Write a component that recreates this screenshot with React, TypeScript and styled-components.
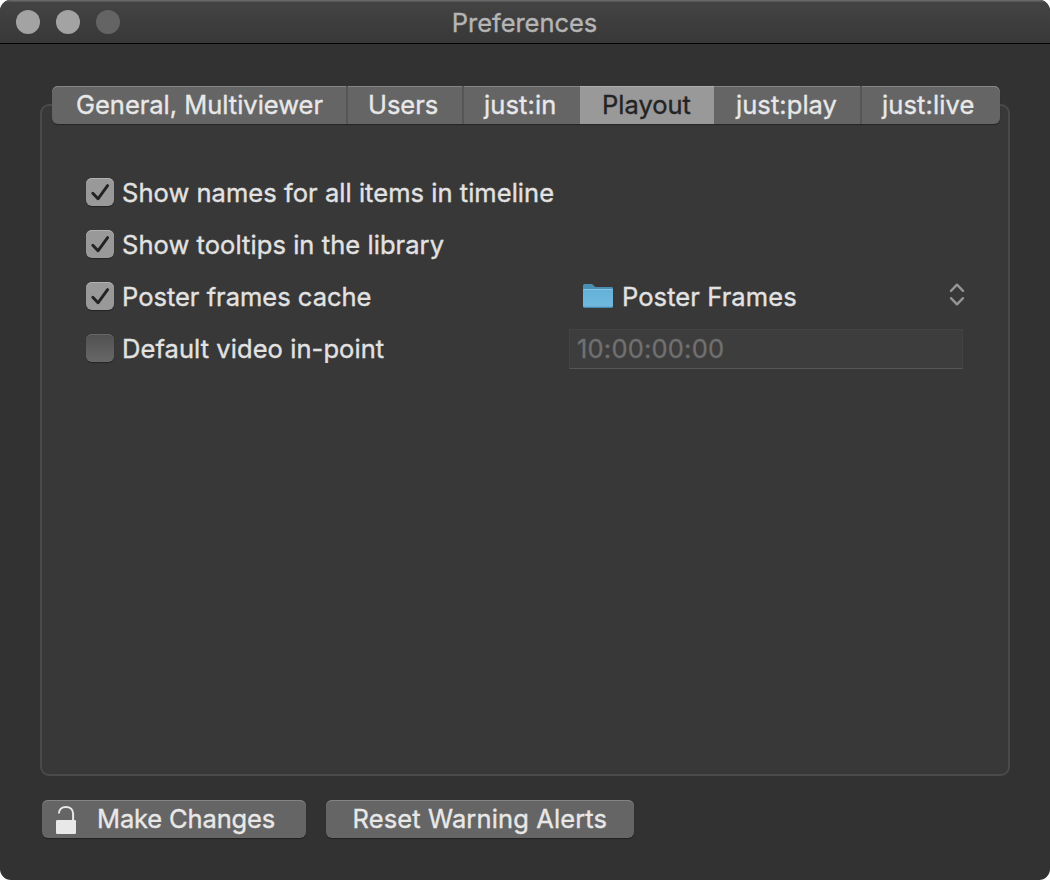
import React from "react";
import styled, { createGlobalStyle, css } from "styled-components";

const Global = createGlobalStyle`
  * { box-sizing: border-box; }
  body { margin: 0; background: #fff; }
`;

const Window = styled.main`
  display: flex;
  flex-direction: column;
  width: 1050px;
  height: 880px;
  overflow: hidden;
  border-radius: 11px;
  background: #323232;
  font-family: Inter, "Liberation Sans", sans-serif;
  font-size: 25.5px;
  line-height: 38px;
  color: #e2e2e2;
`;

const TitleBar = styled.header`
  display: grid;
  grid-template-columns: 1fr auto 1fr;
  align-items: center;
  height: 44px;
  padding: 0 16px;
  background: linear-gradient(#444444, #383838);
  border-bottom: 1px solid #000;
  box-shadow: inset 0 1px 0 #686868, inset 0 2px 0 #565656;
`;

const TrafficLights = styled.div`
  display: flex;
  gap: 16px;
`;

const Light = styled.span<{ $dim?: boolean }>`
  width: 24px;
  height: 24px;
  border-radius: 50%;
  background: ${(p) => (p.$dim ? "#646464" : "#a3a3a3")};
`;

const Text = styled.span<{ $spacing?: number }>`
  white-space: pre;
  letter-spacing: ${(p) => p.$spacing ?? 0}px;
  -webkit-text-stroke: 0.35px currentColor;
`;

const Title = styled.h1`
  margin: 2px 1px 0 0;
  font: inherit;
  color: #b5b5b5;
`;

const Body = styled.div`
  display: flex;
  flex-direction: column;
  flex: 1;
  padding: 42px 40px;
`;

const raised = css`
  background: #656565;
  box-shadow: inset 0 1px 0 #858585, 0 1px 1px rgba(0, 0, 0, 0.35);
`;

const Tabs = styled.nav`
  ${raised}
  position: relative;
  display: flex;
  height: 38px;
  margin: 0 10px -20px 12px;
  border-radius: 6px;
  overflow: hidden;
`;

const Tab = styled.button<{ $width: number; $inset: number; $selected?: boolean; $divider?: boolean }>`
  width: ${(p) => p.$width}px;
  padding: 0 0 0 ${(p) => p.$inset}px;
  border: 0;
  border-right: ${(p) => (p.$divider ? "2px solid #555" : "0")};
  background: ${(p) => (p.$selected ? "#999999" : "transparent")};
  box-shadow: inset 0 1px 0 ${(p) => (p.$selected ? "#b0b0b0" : "#858585")};
  color: ${(p) => (p.$selected ? "#232323" : "#e8e8e8")};
  font: inherit;
  text-align: left;
`;

const Panel = styled.section`
  height: 672px;
  padding: 61px 44px 0;
  border: 2px solid #4a4a4a;
  border-radius: 9px;
  background: #383838;
`;

const Row = styled.div`
  display: grid;
  grid-template-columns: 483px 1fr;
  align-items: center;
  height: 52px;
`;

const Option = styled.label`
  display: flex;
  align-items: center;
  gap: 8px;
`;

const Box = styled.span<{ $checked?: boolean }>`
  display: flex;
  width: 28px;
  height: 28px;
  margin-top: -2px;
  border-radius: 6px;
  background: ${(p) => (p.$checked ? "#999999" : "linear-gradient(#505050, #686868)")};
  box-shadow: inset 0 1px 0 ${(p) => (p.$checked ? "#b2b2b2" : "#666")}, 0 1px 1px rgba(0, 0, 0, 0.35);
`;

const Popup = styled.div`
  display: flex;
  align-items: center;
  padding-left: 14px;
  svg { display: block; }
`;

const FolderSlot = styled.span`
  width: 30px;
  margin: -2px 9px 0 0;
`;

const Chevrons = styled.span`
  margin: -4px -1px 0 auto;
`;

const Field = styled.div`
  height: 40px;
  width: 394px;
  padding: 0 7px;
  background: #3d3d3d;
  border: 1px solid #434343;
  border-bottom-color: #565656;
  color: #707070;
`;

const Actions = styled.footer`
  display: flex;
  gap: 20px;
  margin: 24px 0 0 2px;
`;

const Button = styled.button<{ $width: number; $inset: number }>`
  ${raised}
  display: flex;
  align-items: center;
  width: ${(p) => p.$width}px;
  height: 38px;
  padding: 0 0 0 ${(p) => p.$inset}px;
  border: 0;
  border-radius: 6px;
  color: #e8e8e8;
  font: inherit;
  text-align: left;
`;

const LockSlot = styled.span`
  width: 41px;
  height: 38px;
`;

const Check = () => (
  <svg width="28" height="28" viewBox="0 0 28 28" fill="none">
    <path d="M6.8 15.3 12 20.8 21.6 7.6" stroke="#232323" strokeWidth="2.9" strokeLinecap="round" strokeLinejoin="round" />
  </svg>
);

const Folder = () => (
  <svg width="30" height="26" viewBox="0 0 30 26">
    <defs>
      <linearGradient id="folder" x1="0" y1="0" x2="0" y2="1">
        <stop offset="0" stopColor="#64b0d8" />
        <stop offset="1" stopColor="#70bade" />
      </linearGradient>
    </defs>
    <path d="M0 2.6Q0 1 1.6 1H8.4Q9.4 1 10.2 1.9L11.4 3.2Q12 3.9 13 3.9H28.6Q30 3.9 30 5.3V10H0Z" fill="#4b8fb3" />
    <path d="M0 6.2H30V23.4Q30 25 28.4 25H1.6Q0 25 0 23.4Z" fill="#478bb0" />
    <path d="M0 6.2H30V22.6Q30 23.8 28.6 23.8H1.4Q0 23.8 0 22.6Z" fill="url(#folder)" />
    <path d="M.4 6.5H29.6" stroke="#83c5e6" strokeWidth="1" />
  </svg>
);

const UpDown = () => (
  <svg width="16" height="24" viewBox="0 0 16 24" fill="none" stroke="#969696" strokeWidth="2.3" strokeLinecap="round" strokeLinejoin="round">
    <path d="M2 7.9 8 1.6 14 7.9" />
    <path d="M2 15.1 8 21.4 14 15.1" />
  </svg>
);

const Lock = () => (
  <svg width="24" height="38" viewBox="0 0 24 38">
    <rect x="0" y="20" width="20" height="14" rx="1.2" fill="#e8e8e8" />
    <path d="M2.9 13.6C2.9 9.5 5.6 6.9 9.9 6.9S17.1 9.5 17.1 13.6V20.5" fill="none" stroke="#e8e8e8" strokeWidth="2" />
  </svg>
);

const tabs = [
  { label: "General, Multiviewer", width: 296, inset: 24, spacing: -0.02, divider: true },
  { label: "Users", width: 116, inset: 20, spacing: -0.05, divider: true },
  { label: "just:in", width: 116, inset: 20, spacing: 0.12 },
  { label: "Playout", width: 134, inset: 22, spacing: 0 },
  { label: "just:play", width: 148, inset: 22, spacing: 0.06, divider: true },
  { label: "just:live", width: 138, inset: 20, spacing: 0.1 },
];

const OptionItem = ({ label, checked, spacing }: { label: string; checked?: boolean; spacing?: number }) => (
  <Option>
    <Box $checked={checked}>{checked && <Check />}</Box>
    <Text $spacing={spacing}>{label}</Text>
  </Option>
);

export default function App() {
  return (
    <Window>
      <Global />
      <TitleBar>
        <TrafficLights>
          <Light />
          <Light />
          <Light $dim />
        </TrafficLights>
        <Title><Text $spacing={-0.04}>Preferences</Text></Title>
      </TitleBar>
      <Body>
        <Tabs>
          {tabs.map((t) => (
            <Tab key={t.label} $width={t.width} $inset={t.inset} $selected={t.label === "Playout"} $divider={t.divider}>
              <Text $spacing={t.spacing}>{t.label}</Text>
            </Tab>
          ))}
        </Tabs>
        <Panel>
          <Row><OptionItem checked label="Show names for all items in timeline" spacing={0.04} /></Row>
          <Row><OptionItem checked label="Show tooltips in the library" spacing={0.06} /></Row>
          <Row>
            <OptionItem checked label="Poster frames cache" />
            <Popup>
              <FolderSlot><Folder /></FolderSlot>
              <Text $spacing={0.09}>Poster Frames</Text>
              <Chevrons><UpDown /></Chevrons>
            </Popup>
          </Row>
          <Row>
            <OptionItem label="Default video in-point" spacing={0.07} />
            <Field><Text $spacing={0.2}>10:00:00:00</Text></Field>
          </Row>
        </Panel>
        <Actions>
          <Button $width={264} $inset={14}>
            <LockSlot><Lock /></LockSlot>
            <Text $spacing={-0.15}>Make Changes</Text>
          </Button>
          <Button $width={308} $inset={26.5}>
            <Text $spacing={0.12}>Reset Warning Alerts</Text>
          </Button>
        </Actions>
      </Body>
    </Window>
  );
}
